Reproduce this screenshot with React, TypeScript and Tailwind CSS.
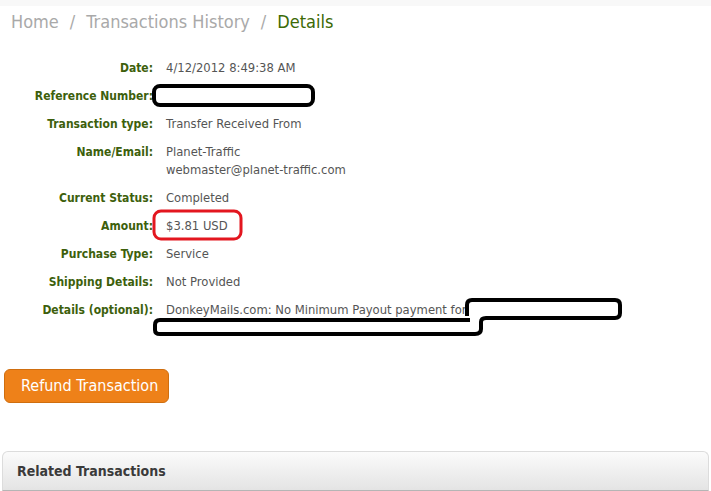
import React from "react";

const rows: { label: string; value: React.ReactNode }[] = [
  { label: "Date:", value: "4/12/2012 8:49:38 AM" },
  { label: "Reference Number:", value: "" },
  { label: "Transaction type:", value: "Transfer Received From" },
  {
    label: "Name/Email:",
    value: (
      <>
        <div>Planet-Traffic</div>
        <div>webmaster@planet-traffic.com</div>
      </>
    ),
  },
  { label: "Current Status:", value: "Completed" },
  { label: "Amount:", value: "$3.81 USD" },
  { label: "Purchase Type:", value: "Service" },
  { label: "Shipping Details:", value: "Not Provided" },
  {
    label: "Details (optional):",
    value: (
      <>
        <div>DonkeyMails.com: No Minimum Payout payment for</div>
        <div>&nbsp;</div>
      </>
    ),
  },
];

const condensed = '"DejaVu Sans Condensed", "DejaVu Sans", Tahoma, sans-serif';

export default function App() {
  return (
    <div
      className="relative w-[711px] h-[491px] overflow-hidden bg-white"
      style={{ fontFamily: '"DejaVu Sans", Tahoma, sans-serif' }}
    >
      {/* breadcrumb */}
      <div className="h-[6px] bg-[#f8f8f8]" />
      <div
        className="flex items-center gap-[11px] pl-[11px] pt-[3px] h-[28px] text-[18px] text-[#a9a9a9]"
        style={{ fontFamily: condensed }}
      >
        <span>Home</span>
        <span>/</span>
        <span>Transactions History</span>
        <span>/</span>
        <span className="text-[#3c6a06]">Details</span>
      </div>

      {/* details table */}
      <div className="mt-[25px] flex flex-col gap-[10px] text-[11.6px] leading-[18px]">
        {rows.map((r) => (
          <div key={r.label} className="flex">
            <div
              className="w-[153px] shrink-0 text-right text-[12px] font-bold text-[#3d5f0c]"
              style={{ fontFamily: condensed }}
            >
              {r.label}
            </div>
            <div className="pl-[13px] text-[#555555]">{r.value || "\u00a0"}</div>
          </div>
        ))}
      </div>

      {/* scribbles over the screenshot */}
      <svg className="absolute left-0 top-0 pointer-events-none" width="711" height="491">
        <rect x="154" y="86" width="159" height="19" rx="6" fill="none" stroke="#000" strokeWidth="4" />
        <rect x="154" y="211" width="87" height="28" rx="7" fill="none" stroke="#e3161f" strokeWidth="3" />
        <path
          d="M472 300 H615 Q620 300 620 305 V313 Q620 318 615 318 H486 Q481 318 481 322 V329 Q481 334 475 334 H160 Q155 334 155 330 V325 Q155 320 160 320 H470"
          fill="none"
          stroke="#000"
          strokeWidth="4"
          strokeLinejoin="round"
        />
        <path d="M472 300 Q467 300 467 305 V316" fill="none" stroke="#000" strokeWidth="4" />
      </svg>

      {/* refund button */}
      <div className="mt-[32px] pl-[4px]">
        <button
          className="h-[34px] w-[165px] rounded-[6px] border border-[#cf6e0f] bg-[#ee8119] pl-[16px] text-left text-[16px] text-white"
          style={{ fontFamily: condensed }}
        >
          Refund Transaction
        </button>
      </div>

      {/* related transactions panel */}
      <div className="mx-[2px] mt-[48px] h-[40px] rounded-t-[6px] border border-[#dcdcdc] border-b-[#b5b5b5] bg-gradient-to-b from-[#fbfbfb] to-[#e4e4e4] pl-[14px] flex items-center">
        <span className="text-[14px] font-bold text-[#3a3a3a]" style={{ fontFamily: condensed }}>
          Related Transactions
        </span>
      </div>
    </div>
  );
}
